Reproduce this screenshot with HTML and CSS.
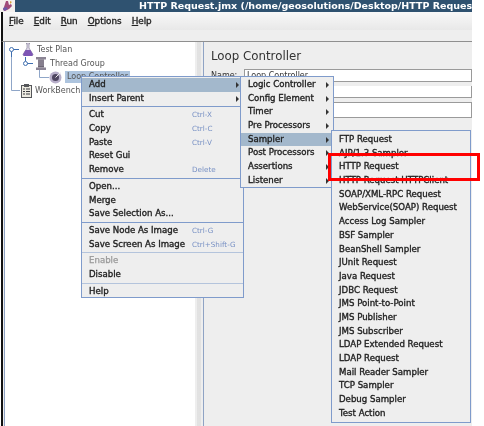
FILE: index.html
```html
<!DOCTYPE html>
<html lang="en">
<head>
<meta charset="UTF-8">
<title>HTTP Request.jmx</title>
<link rel="stylesheet" href="styles.css">
</head>
<body>

<div class="window">
    <div class="titlebar">
        <div class="app-icon">
            <svg width="13" height="12" viewBox="0 0 13 12"><path d="M6 1l2 0 1 4 2-1 1 2-3 3-4 2-2-1z" fill="#a14a7a"/><path d="M3 8l3-1 2 2-4 2z" fill="#6a5aa8"/><path d="M10 1l2 1-2 2z" fill="#d8a23c"/></svg>
        </div>
        <div class="title">HTTP Request.jmx (/home/geosolutions/Desktop/HTTP Reques</div>
    </div>
    <div class="menubar">
        <span><u>F</u>ile</span>
        <span><u>E</u>dit</span>
        <span><u>R</u>un</span>
        <span><u>O</u>ptions</span>
        <span><u>H</u>elp</span>
    </div>
    <div class="toolbar"></div>

    <div class="main">
        <div class="tree">
            <svg class="tree-lines" width="60" height="60" viewBox="0 0 60 60">
                <g fill="none" stroke="#8fa6c8">
                    <path d="M7.500 8.500V48.500H16"/>
                    <path d="M35.500 28V35.500H45"/>
                </g>
                <path d="M7.500 10V15M7.500 7.500H15M21.500 15V19M21.500 21.500H29" stroke="#3f6fb0" fill="none"/>
                <g fill="#fff" stroke="#3f6fb0">
                    <circle cx="7.500" cy="7.500" r="2"/>
                    <circle cx="21.500" cy="21.500" r="2"/>
                </g>
            </svg>
            <div class="node node-plan">
                <svg width="12" height="13" viewBox="0 0 12 13"><path d="M4.500 0h3v1h-.5v4l4 6.500-1 1.500h-8l-1-1.500 4-6.500v-4h-.5z" fill="#ded8ea" stroke="#77728c" stroke-width=".6"/><path d="M3.500 7h5l2.500 4.500-1 1.500h-8l-1-1.500z" fill="#7d55b5"/></svg>
                <span>Test Plan</span>
            </div>
            <div class="node node-group">
                <svg width="12" height="13" viewBox="0 0 12 13"><rect x="1" y="0" width="10" height="2.500" fill="#8b8494"/><rect x="3" y="2.500" width="6" height="8" fill="#6d6675"/><path d="M3 4h6M3 6h6M3 8h6" stroke="#b5b0bb" stroke-width=".7"/><rect x="1" y="10.500" width="10" height="2.500" fill="#8b8494"/></svg>
                <span>Thread Group</span>
            </div>
            <div class="node node-loop">
                <svg width="13" height="13" viewBox="0 0 13 13"><circle cx="6.500" cy="6.500" r="6" fill="#b7aec9"/><circle cx="6.500" cy="6.500" r="3.500" fill="#4e4560"/><path d="M6.500 6.500l5-5" stroke="#eee" stroke-width="1"/></svg>
                <span class="selected">Loop Controller</span>
            </div>
            <div class="node node-bench">
                <svg width="11" height="14" viewBox="0 0 11 14"><rect x=".5" y="1.500" width="10" height="12" fill="#eceae0" stroke="#55565a"/><rect x="3" y="0" width="5" height="3" fill="#55565a"/><path d="M2 5h2M5 5h4M2 7.500h2M5 7.500h4M2 10h2M5 10h4" stroke="#3a3b40"/></svg>
                <span>WorkBench</span>
            </div>
        </div>
        <div class="splitter"></div>
        <div class="panel">
            <h1>Loop Controller</h1>
            <div class="name-row">
                <label>Name:</label>
                <div class="field">Loop Controller</div>
            </div>
            <div class="field field-blank"></div>
            <div class="field field-tall"></div>
        </div>
    </div>
</div>

<div class="popup menu-main">
    <div class="item active">Add<i class="arrow"></i></div>
    <div class="item">Insert Parent<i class="arrow"></i></div>
    <div class="sep"></div>
    <div class="item">Cut<em>Ctrl-X</em></div>
    <div class="item">Copy<em>Ctrl-C</em></div>
    <div class="item">Paste<em>Ctrl-V</em></div>
    <div class="item">Reset Gui</div>
    <div class="item">Remove<em>Delete</em></div>
    <div class="sep"></div>
    <div class="item">Open...</div>
    <div class="item">Merge</div>
    <div class="item">Save Selection As...</div>
    <div class="sep"></div>
    <div class="item">Save Node As Image<em>Ctrl-G</em></div>
    <div class="item">Save Screen As Image<em>Ctrl+Shift-G</em></div>
    <div class="sep sep-light"></div>
    <div class="item disabled">Enable</div>
    <div class="item">Disable</div>
    <div class="sep sep-light"></div>
    <div class="item">Help</div>
</div>

<div class="popup menu-add">
    <div class="item">Logic Controller<i class="arrow"></i></div>
    <div class="item">Config Element<i class="arrow"></i></div>
    <div class="item">Timer<i class="arrow"></i></div>
    <div class="item">Pre Processors<i class="arrow"></i></div>
    <div class="item active">Sampler<i class="arrow"></i></div>
    <div class="item">Post Processors<i class="arrow"></i></div>
    <div class="item">Assertions<i class="arrow"></i></div>
    <div class="item">Listener<i class="arrow"></i></div>
</div>

<div class="popup menu-sampler">
    <div class="item">FTP Request</div>
    <div class="item">AJP/1.3 Sampler</div>
    <div class="item">HTTP Request</div>
    <div class="item">HTTP Request HTTPClient</div>
    <div class="item">SOAP/XML-RPC Request</div>
    <div class="item">WebService(SOAP) Request</div>
    <div class="item">Access Log Sampler</div>
    <div class="item">BSF Sampler</div>
    <div class="item">BeanShell Sampler</div>
    <div class="item">JUnit Request</div>
    <div class="item">Java Request</div>
    <div class="item">JDBC Request</div>
    <div class="item">JMS Point-to-Point</div>
    <div class="item">JMS Publisher</div>
    <div class="item">JMS Subscriber</div>
    <div class="item">LDAP Extended Request</div>
    <div class="item">LDAP Request</div>
    <div class="item">Mail Reader Sampler</div>
    <div class="item">TCP Sampler</div>
    <div class="item">Debug Sampler</div>
    <div class="item">Test Action</div>
</div>

<div class="highlight"></div>

</body>
</html>
```

FILE: styles.css
```css
html, body {
    margin: 0;
    height: 100%;
    background-color: #fff;
    overflow: hidden;
}
body {
    font-family: "DejaVu Sans", sans-serif;
    font-size: 9px;
    color: #333;
    filter: blur(.3px);
}
.window {
    width: 472px;
    height: 426px;
    display: flex;
    flex-direction: column;
    overflow: hidden;
}
.titlebar {
    height: 12px;
    display: flex;
    background-color: #2f5270;
    color: #fff;
    flex: none;
}
.app-icon {
    width: 15px;
    background-color: #f4f0ee;
    flex: none;
}
.app-icon svg {
    display: block;
}
.title {
    margin-left: 124px;
    font-size: 9.5px;
    font-weight: bold;
    line-height: 12px;
    white-space: nowrap;
}
.menubar, .toolbar, .main {
    margin-left: 1px;
    border-left: 2px solid #111;
}
.menubar {
    height: 18px;
    background: linear-gradient(#f8f8f8, #e8e8e8);
    display: flex;
    align-items: center;
    gap: 10px;
    padding-left: 6px;
    font-size: 8.8px;
    color: #222;
    -webkit-text-stroke: .35px #222;
    flex: none;
}
.toolbar {
    height: 11px;
    background-color: #eeeeee;
    border-bottom: 1px solid #8f8f8f;
    flex: none;
}
.main {
    flex: 1;
    display: flex;
    background-color: #eee;
    padding-left: 1px;
}
.tree {
    position: relative;
    width: 191px;
    box-sizing: border-box;
    background-color: #fff;
    border-left: 1px solid #8fa3c4;
    padding-top: 1px;
    flex: none;
}
.tree-lines {
    position: absolute;
    left: -1.500px;
    top: 0;
}
.node {
    display: flex;
    align-items: center;
    height: 13.7px;
    gap: 3px;
    font-size: 8px;
    color: #555;
}
.node-plan { padding-left: 17px; }
.node-group { padding-left: 30px; }
.node-loop { padding-left: 44px; }
.node-bench { padding-left: 16px; }
.selected {
    background-color: #adc4de;
    padding: 0 2px;
    line-height: 12px;
}
.splitter {
    width: 8px;
    flex: none;
    background-image: radial-gradient(#c8c8c8 .5px, transparent .8px);
    background-size: 2px 2px;
    background-color: #eee;
    background-clip: content-box;
    padding: 0 2px;
    box-sizing: border-box;
}
.panel {
    flex: 1;
    border-left: 1px solid #8fa3c4;
    padding: 7px 0 0 7px;
}
h1 {
    margin: 0 0 5px;
    font-size: 11.8px;
    font-weight: normal;
    line-height: 15px;
    color: #333;
}
.name-row {
    display: flex;
    height: 13px;
    margin-bottom: 4px;
}
.name-row label {
    font-size: 8px;
    line-height: 13px;
    width: 33px;
    flex: none;
}
.field {
    flex: 1;
    background-color: #fff;
    border: 1px solid #9a9a9a;
    font-size: 8px;
    line-height: 11px;
    padding-left: 2px;
    box-sizing: border-box;
}
.field-blank {
    height: 12px;
    margin-bottom: 4px;
    border-top: none;
}
.field-tall {
    height: 16px;
}
.popup {
    position: absolute;
    box-sizing: border-box;
    background-color: #eee;
    border: 1px solid #7f9bcb;
    padding-top: 1px;
    font-size: 8.6px;
    color: #222;
    -webkit-text-stroke: .35px #222;
}
.menu-main {
    left: 81px;
    top: 76px;
    width: 163px;
    height: 222px;
}
.menu-add {
    left: 240px;
    top: 76px;
    width: 94px;
    height: 112px;
}
.menu-sampler {
    left: 331px;
    top: 130px;
    width: 140px;
    height: 293px;
    padding-top: 2px;
}
.item {
    position: relative;
    height: 13.7px;
    line-height: 13.7px;
    padding-left: 7px;
    white-space: nowrap;
}
.active {
    background-color: #a3b8cc;
}
.disabled {
    color: #999;
    -webkit-text-stroke: .25px #999;
}
.item em {
    position: absolute;
    left: 110px;
    font-style: normal;
    font-size: 7.2px;
    color: #7790c4;
    -webkit-text-stroke: 0;
}
.arrow {
    position: absolute;
    right: 4px;
    top: 4px;
    border-left: 3px solid #333;
    border-top: 3px solid transparent;
    border-bottom: 3px solid transparent;
}
.sep {
    height: 1px;
    margin: 1px 0;
    background-color: #7f9bcb;
}
.sep-light {
    background-color: #b4c4dc;
}
.highlight {
    position: absolute;
    left: 328px;
    top: 153px;
    width: 152px;
    height: 28px;
    box-sizing: border-box;
    border: 3px solid #f00;
}
```
